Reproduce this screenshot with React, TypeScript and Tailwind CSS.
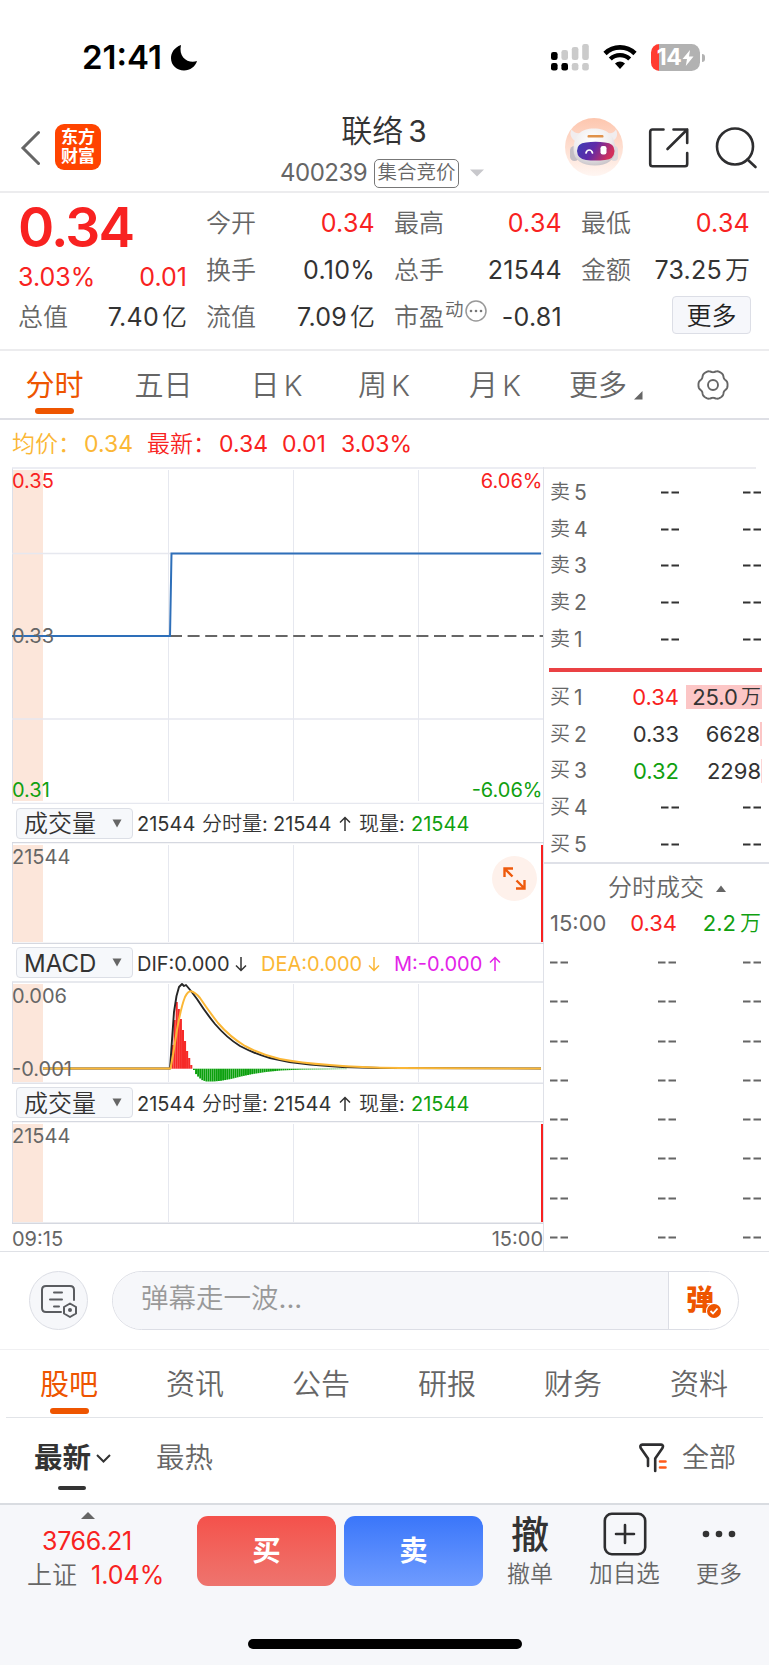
import React from "react";

const RED = "#f82221";
const GRID = "#e6e8ef";

const gearPath = (() => {
  const pts: string[] = [];
  for (let i = 0; i < 120; i++) {
    const a = (i / 120) * Math.PI * 2;
    const r = 13.9 + 0.9 * Math.cos(6 * a) - 0.25 * Math.cos(12 * a);
    pts.push(`${(16 + r * Math.cos(a)).toFixed(2)} ${(16 + r * Math.sin(a)).toFixed(2)}`);
  }
  return `M${pts.join("L")}Z`;
})();

function StatusBar() {
  return (
    <div className="flex h-[105px] items-start pl-[82px]">
      <div className="mt-[40px] w-[84px] text-[33px] font-semibold leading-[34px] text-black">21:41</div>
      <svg className="ml-[4px] mt-[44px]" width="28" height="28" viewBox="0 0 28 28">
        <path d="M11 1C4 3.500 1 9 1 14.300C1 21.500 7 26.500 14 26.500C20 26.500 25.500 22.500 27 17C19 20 8 14 11 1Z" fill="#000" />
      </svg>
      <svg className="ml-[353px] mt-[43px]" width="38" height="28" viewBox="0 0 38 28">
        <g fill="#000">
          <rect x="0" y="9" width="6.600" height="8" rx="2.300" />
          <rect x="0" y="20" width="6.600" height="7.500" rx="2.300" />
          <rect x="10.400" y="20" width="6.600" height="7.500" rx="2.300" />
        </g>
        <g fill="#cbcbcb">
          <rect x="10.400" y="7" width="6.600" height="10" rx="2.300" />
          <rect x="20.800" y="4" width="6.600" height="13" rx="2.300" />
          <rect x="31.200" y="1" width="6.600" height="16" rx="2.300" />
          <rect x="20.800" y="20" width="6.600" height="7.500" rx="2.300" />
          <rect x="31.200" y="20" width="6.600" height="7.500" rx="2.300" />
        </g>
      </svg>
      <svg className="ml-[14px] mt-[44px]" width="34" height="26" viewBox="0 0 34 26">
        <path d="M2 9.500A21.500 21.500 0 0 1 32 9.500" stroke="#000" strokeWidth="4.600" fill="none" />
        <path d="M7.300 15A14 14 0 0 1 26.700 15" stroke="#000" strokeWidth="4.400" fill="none" />
        <path d="M12 19.500A7.500 7.500 0 0 1 22 19.500L17 25Z" fill="#000" />
      </svg>
      <div className="ml-[14px] mt-[44px] flex items-center">
        <div className="flex h-[27px] w-[49px] items-center justify-center rounded-[8.5px] bg-[linear-gradient(90deg,#ff3b30_8px,#b2b2b2_8px)]">
          <span className="text-[23px] font-bold leading-none tracking-[-0.5px] text-white">14</span>
          <svg className="ml-[1px]" width="12" height="16" viewBox="0 0 12 16"><path d="M8 0L0.500 9H5L3.800 16L11.500 6.500H7Z" fill="#fff" /></svg>
        </div>
        <div className="ml-[2px] h-[8px] w-[3px] rounded-r-full bg-[#b2b2b2]" />
      </div>
    </div>
  );
}

function Robot() {
  return (
    <svg width="60" height="60" viewBox="0 0 60 60">
      <defs>
        <linearGradient id="halo" x1="0" y1="0" x2="0" y2="1">
          <stop offset="0" stopColor="#fdc6ae" /><stop offset="1" stopColor="#fff6f2" />
        </linearGradient>
        <linearGradient id="visor" x1="0" y1="0" x2="1" y2="0.3">
          <stop offset="0" stopColor="#3a3fb6" /><stop offset="0.5" stopColor="#5f2aa8" /><stop offset="1" stopColor="#d22f5c" />
        </linearGradient>
        <radialGradient id="shell" cx="0.45" cy="0.3" r="0.75">
          <stop offset="0" stopColor="#fff" /><stop offset="0.6" stopColor="#efedee" /><stop offset="1" stopColor="#c4bfc4" />
        </radialGradient>
      </defs>
      <circle cx="30" cy="30" r="29" fill="url(#halo)" />
      <path d="M13 25C7 22 5 17 7.500 12.500C10 16 14 17 18 15.500ZM47 25C53 22 54.500 18 52 12.500C50 16 47 17 42 15.500Z" fill="#f1edef" />
      <rect x="6" y="29" width="9" height="15" rx="4.500" fill="#c3bec4" />
      <rect x="46.500" y="29" width="7.500" height="15" rx="4" fill="#dedade" />
      <path d="M9.500 33C9.500 18 17 11.500 30 11.500C43 11.500 51 18 51.500 33C51 43 43 48.500 31 48.500C18 48.500 9.500 43 9.500 33Z" fill="url(#shell)" />
      <rect x="23.500" y="18" width="16" height="2.600" rx="1.200" fill="#e0924a" />
      <path d="M22 25.500Q31.500 24 41 25.500Q50.500 26 50.500 34Q50 42.500 41 43Q31.500 44 22 43Q13.500 42 13 34Q13 26 22 25.500Z" fill="url(#visor)" />
      <path d="M22 36C23 32 27.500 32 28.500 36" stroke="#fff" strokeWidth="1.700" fill="none" strokeLinecap="round" />
      <rect x="36.500" y="29" width="6" height="8.500" rx="2.200" fill="#fff" />
    </svg>
  );
}

function Header() {
  return (
    <div className="flex h-[88px] items-start border-b-2 border-[#ececee]">
      <svg className="ml-[20px] mt-[25px]" width="20" height="36" viewBox="0 0 20 36">
        <path d="M18.500 2.500L3 18L18.500 33.500" stroke="#666" strokeWidth="3" fill="none" strokeLinecap="round" />
      </svg>
      <div className="ml-[15px] mt-[19px] flex size-[46px] flex-col items-center justify-center rounded-[9px] bg-[#ff4400] font-['Inter','Noto_Sans_CJK_SC',sans-serif] text-[17px] font-bold leading-[19px] text-white">
        <span>东方</span><span>财富</span>
      </div>
      <div className="ml-[139px] flex w-[288px] flex-col items-center">
        <div className="mt-[9px] flex text-[31px] leading-[34px] text-[#333]">联络<span className="ml-[5px] text-[30px]">3</span></div>
        <div className="mt-[10px] flex h-[30px] w-full items-center pl-[40px] text-[24px] text-[#666]">
          <span className="w-[86px] tracking-[-0.500px]">400239</span>
          <span className="ml-[8px] flex h-[29px] w-[85px] items-center justify-center rounded-[5px] border border-[#777] text-[19.500px] leading-none">集合竞价</span>
          <svg className="ml-[11px]" width="14" height="8" viewBox="0 0 14 8"><path d="M0 0.500H14L7 7.500Z" fill="#c8c8cc" /></svg>
        </div>
      </div>
      <div className="ml-[36px] mt-[12px]"><Robot /></div>
      <svg className="ml-[24px] mt-[22px]" width="42" height="42" viewBox="0 0 42 42" fill="none" stroke="#2e2e30" strokeWidth="2.600" strokeLinecap="round" strokeLinejoin="round">
        <path d="M15.500 2.500H4.500Q2.200 2.500 2.200 4.800V37Q2.200 39.200 4.500 39.200H37Q39.200 39.200 39.200 37V26" />
        <path d="M25.500 2.500H39.200V16M39.200 2.500L19.500 22" />
      </svg>
      <svg className="ml-[25px] mt-[22px]" width="44" height="42" viewBox="0 0 44 42" fill="none" stroke="#2e2e30" strokeWidth="2.600">
        <circle cx="20" cy="19.500" r="18" /><path d="M32.500 32.500L40.500 40" strokeLinecap="round" />
      </svg>
    </div>
  );
}

function Stat({ label, value, red, extra }: { label: string; value: React.ReactNode; red?: boolean; extra?: React.ReactNode }) {
  return (
    <div className="flex h-[47px] items-center justify-between text-[25px] leading-none">
      <span className="flex text-[#666]">{label}{extra}</span>
      <span className={red ? "flex tracking-[0.250px] text-[#f82221]" : "flex tracking-[0.250px] text-[#333]"}>{value}</span>
    </div>
  );
}

const Wan = ({ n, u }: { n: string; u: string }) => <>{n}<span className="ml-[3px] tracking-normal">{u}</span></>;

function Quote() {
  return (
    <div className="grid h-[158px] grid-cols-[169px_169px_168px_169px] gap-x-[19px] border-b-2 border-[#ececee] pl-[18px] pt-[7px]">
      <div className="flex flex-col">
        <div className="h-[53px] pt-[1px] text-[55px] font-semibold leading-[52px] tracking-[-1.800px] text-[#f82221]">0.34</div>
        <div className="flex h-[41px] items-center justify-between pt-[8px] text-[25px] leading-none text-[#f82221]"><span>3.03%</span><span>0.01</span></div>
        <Stat label="总值" value={<Wan n="7.40" u="亿" />} />
      </div>
      <div>
        <Stat label="今开" value="0.34" red /><Stat label="换手" value="0.10%" /><Stat label="流值" value={<Wan n="7.09" u="亿" />} />
      </div>
      <div>
        <Stat label="最高" value="0.34" red /><Stat label="总手" value="21544" />
        <Stat label="市盈" value="-0.81" extra={
          <><span className="-mt-[5px] ml-[1px] text-[18.500px]">动</span>
          <svg className="-mt-[5px] ml-[1px]" width="22" height="22" viewBox="0 0 22 22"><circle cx="11" cy="11" r="10" fill="none" stroke="#999" strokeWidth="1.500" /><g fill="#777"><circle cx="6" cy="11" r="1.300" /><circle cx="11" cy="11" r="1.300" /><circle cx="16" cy="11" r="1.300" /></g></svg></>
        } />
      </div>
      <div>
        <Stat label="最低" value="0.34" red /><Stat label="金额" value={<Wan n="73.25" u="万" />} />
        <div className="ml-[91px] mt-[2px] flex h-[38px] w-[79px] items-center justify-center rounded-[4px] border border-[#dcdee6] bg-[#f6f7fb] pt-[2px] text-[25px] leading-none text-[#222]">更多</div>
      </div>
    </div>
  );
}

function ChartTabs() {
  return (
    <div className="flex h-[69px] border-b-2 border-[#dedfe5] pt-[19px] text-[29px] leading-[32px] text-[#666]">
      <div className="flex w-[109px] flex-col items-center text-[#ee5500]"><span className="font-['Inter','Noto_Sans_CJK_SC',sans-serif] font-normal">分时</span><span className="mt-[6px] h-[6px] w-[39px] rounded-full bg-[#ee5500]" /></div>
      <div className="w-[109px] text-center">五日</div>
      <div className="flex w-[117px] justify-center">日<span className="ml-[4px] font-light">K</span></div>
      <div className="flex w-[98px] justify-center">周<span className="ml-[4px] font-light">K</span></div>
      <div className="flex w-[124px] justify-center">月<span className="ml-[4px] font-light">K</span></div>
      <div className="ml-[12px] flex">更多<svg className="ml-[7px] mt-[21px]" width="9" height="9"><path d="M8.500 0V8.500H0Z" fill="#666" /></svg></div>
      <svg className="-mt-[1px] ml-[54px]" width="32" height="32" viewBox="0 0 32 32" fill="none" stroke="#666" strokeWidth="1.900"><path d={gearPath} /><circle cx="16" cy="16" r="5" /></svg>
    </div>
  );
}

const VGrid = ({ y1, y2 }: { y1: number; y2: number }) => (
  <>
    <rect x="12" y={y1} width="31" height={y2 - y1} fill="#fce6da" />
    <path d={`M168.500 ${y1}V${y2}M293.500 ${y1}V${y2}M418.500 ${y1}V${y2}`} stroke={GRID} />
    <path d={`M12.500 ${y1 - 2}V${y2 + 2}`} stroke="#dcdfe8" />
  </>
);

function PricePanel() {
  return (
    <svg className="block" width="532" height="337" viewBox="12 467 532 337">
      <VGrid y1={470} y2={801} />
      <path d="M12 468H544M12 803.500H544M12 553.500H543M12 719H543" stroke={GRID} strokeWidth="1.500" />
      <path d="M170 636H543" stroke="#666" strokeWidth="2" strokeDasharray="12 5.600" />
      <path d="M12 636H170L171.500 553.500H541" stroke="#2e6fb9" strokeWidth="2" fill="none" />
      <g fontSize="20">
        <text x="12" y="487.500" fill={RED}>0.35</text><text x="542.500" y="487.500" textAnchor="end" fill={RED}>6.06%</text>
        <text x="12" y="642.500" fill="#666">0.33</text>
        <text x="12" y="797" fill="#10a010">0.31</text><text x="542.500" y="797" textAnchor="end" fill="#10a010">-6.06%</text>
      </g>
    </svg>
  );
}

function VolumePanel({ y, h, line }: { y: number; h: number; line: string }) {
  return (
    <svg className="block" width="532" height={h} viewBox={`12 ${y} 532 ${h}`}>
      <VGrid y1={y + 3} y2={y + h - 2} />
      <path d={line} stroke="#d5d8e0" strokeWidth="1.400" />
      <path d={`M542 ${y + 3}V${y + h - 2}`} stroke={RED} strokeWidth="2" />
      <text x="12" y={y + 22} fontSize="20" fill="#666">21544</text>
    </svg>
  );
}

const redTops = [1045, 1020, 1002, 1009, 1019, 1030, 1041, 1051, 1058, 1065];
const greenKnots = [[193, 1070], [195, 1074], [197.500, 1077], [201, 1080], [205, 1081.500], [213, 1081.500], [220, 1080.800], [230, 1079], [240, 1076.500], [252, 1074], [265, 1072], [280, 1070.500], [300, 1069.600], [350, 1069]];
const greenBottom = (x: number) => {
  for (let i = 1; i < greenKnots.length; i++) {
    const [x0, y0] = greenKnots[i - 1];
    const [x1, y1] = greenKnots[i];
    if (x <= x1) return y0 + ((y1 - y0) * (x - x0)) / (x1 - x0);
  }
  return 1069;
};
const greenBars = Array.from({ length: 74 }, (_, i) => 193 + i * 2.080);

function MacdPanel() {
  return (
    <svg className="block" width="532" height="103" viewBox="12 981 532 103">
      <VGrid y1={984} y2={1082} />
      <path d="M12 982H544M12 1083.300H544" stroke="#e0e2e9" strokeWidth="1.400" />
      {redTops.map((t, i) => <rect key={i} x={171.500 + i * 2.080} y={t} width="2.100" height={1068.700 - t} fill="#f62a28" />)}
      {greenBars.map((x) => <rect key={x} x={x} y="1068.700" width="1.900" height={Math.max(0.400, greenBottom(x) - 1068.700)} fill="#0aa00c" />)}
      <path d="M43 1068.500H170L172 1040L174 1012L176.500 996L179 987L182 984L184 986L186 985L191 991L197 999Q206 1013 215 1024Q227 1038 240 1046Q255 1054 270 1058Q290 1063 310 1064.500Q340 1067.500 380 1068L541 1068.500" stroke="#262626" strokeWidth="1.900" fill="none" strokeLinejoin="round" />
      <path d="M43 1068.500H170.500L173 1055L177 1030Q181 1007 185 997Q188 991 191 991.300Q195 992 200 998Q208 1010 218 1023Q230 1037 245 1046Q262 1055 280 1059Q300 1063 330 1065Q360 1067.500 400 1068L541 1068.500" stroke="#fbb736" strokeWidth="2" fill="none" strokeLinejoin="round" />
      <g fontSize="20" fill="#666"><text x="12" y="1003">0.006</text><text x="12" y="1075.500">-0.001</text></g>
    </svg>
  );
}

function Arrow({ up, color }: { up?: boolean; color: string }) {
  return (
    <svg width="12" height="16" viewBox="0 0 12 16" fill="none" stroke={color} strokeWidth="1.500">
      {up ? <path d="M6 15V1.500M1 6.500L6 1.500L11 6.500" /> : <path d="M6 1V14.500M1 9.500L6 14.500L11 9.500" />}
    </svg>
  );
}

function IndicatorRow({ name, tall, children }: { name: string; tall?: boolean; children: React.ReactNode }) {
  return (
    <div className={tall ? "flex h-[38px] items-center pl-[4px] leading-none" : "flex h-[37px] items-center pl-[4px] leading-none"}>
      <div className="flex h-[31px] w-[117px] shrink-0 items-center justify-between rounded-[4px] border border-[#dcdfe6] bg-[#f6f8fb] pl-[7px] pr-[10px] text-[24px] text-[#333]">
        <span className="pt-[2px]">{name}</span>
        <svg width="10" height="9" viewBox="0 0 10 9"><path d="M0.500 0.500H9.500L5 8.500Z" fill="#666" /></svg>
      </div>
      <div className="ml-[4px] flex items-center pt-[2px] text-[20px] text-[#333]">{children}</div>
    </div>
  );
}

const VolumeText = () => (
  <>
    <span className="w-[65px]">21544</span>
    <span className="w-[71px]">分时量:</span>
    <span className="w-[66px]">21544</span>
    <Arrow up color="#333" />
    <span className="ml-[8px] w-[52px]">现量:</span>
    <span className="text-[#10a010]">21544</span>
  </>
);

function BookRow({ k, p, v, color, bar }: { k: [string, string]; p: string; v: React.ReactNode; color?: string; bar?: string }) {
  return (
    <div className="flex h-[36.800px] items-center pl-[6px] text-[22px] leading-none text-[#333]">
      <span className="flex w-[56px] text-[20px] text-[#666]">{k[0]}<span className="ml-[4px] text-[21px]">{k[1]}</span></span>
      <span className={`w-[73px] text-right ${color ?? ""}`}>{p}</span>
      <span className="flex grow justify-end">
        <span className={`flex h-[24px] items-center justify-end ${bar ?? "pr-[1px]"}`}>{v}</span>
      </span>
    </div>
  );
}

const Dash = ({ c }: { c: string }) => <svg width="18" height="3" viewBox="0 0 18 3"><path d="M0 1.500H7.500M10.500 1.500H18" stroke={c} strokeWidth="1.800" /></svg>;

function EmptyRow({ k }: { k: [string, string] }) {
  return (
    <div className="flex h-[36.800px] items-center pl-[6px] pr-[1px] text-[20px] leading-none text-[#666]">
      <span className="flex w-[111px]">{k[0]}<span className="ml-[4px] text-[21px]">{k[1]}</span></span>
      <Dash c="#333" /><span className="grow" /><Dash c="#333" />
    </div>
  );
}

function OrderBook() {
  return (
    <div className="w-[226px] border-l border-[#dfe1e8]">
      <div className="h-[397px] border-b-2 border-[#dfe1e8] pr-[7px]">
        <div className="h-[7px] w-[212px] border-t-2 border-[#ececf0]" />
        {["5", "4", "3", "2", "1"].map((n) => <EmptyRow key={n} k={["卖", n]} />)}
        <div className="mb-[7px] ml-[5px] mt-[10px] h-[4px] bg-[#ea4144]" />
        <BookRow k={["买", "1"]} p="0.34" v={<>25.0<span className="ml-[3px] text-[20px]">万</span></>} color="text-[#f82221]" bar="w-[76px] bg-[#fcc6c6] pr-[1px]" />
        <BookRow k={["买", "2"]} p="0.33" v="6628" bar="border-r-2 border-[#fcc6c6]" />
        <BookRow k={["买", "3"]} p="0.32" v="2298" color="text-[#10a010]" bar="border-r border-[#fcd6d6]" />
        <EmptyRow k={["买", "4"]} /><EmptyRow k={["买", "5"]} />
      </div>
      <div className="flex h-[43px] items-center pl-[64px] pt-[5px] text-[24px] leading-none text-[#666]">
        分时成交
        <svg className="ml-[12px]" width="10" height="7"><path d="M0 7H10L5 0.500Z" fill="#666" /></svg>
      </div>
      <div className="flex h-[36px] items-center pb-[5px] pl-[6px] pr-[8px] text-[22px] leading-none">
        <span className="w-[62px] text-[#666]">15:00</span>
        <span className="w-[65px] text-right text-[#f82221]">0.34</span>
        <span className="flex grow justify-end text-[#10a010]">2.2<span className="ml-[4px] text-[21px]">万</span></span>
      </div>
      {[0, 1, 2, 3, 4, 5, 6, 7].map((n) => (
        <div key={n} className="flex h-[39.250px] items-center pl-[6px] pr-[8px]"><Dash c="#666" /><span className="w-[90px]" /><Dash c="#666" /><span className="grow" /><Dash c="#666" /></div>
      ))}
    </div>
  );
}

function ChartArea() {
  return (
    <div className="flex h-[785px] overflow-hidden border-b border-[#dfe1e6] pl-[12px]">
      <div className="w-[531px] shrink-0">
        <PricePanel />
        <IndicatorRow name="成交量" tall><VolumeText /></IndicatorRow>
        <div className="relative">
          <VolumePanel y={842} h={102} line="M12 842.500H544M12 943.500H544" />
          <div className="absolute left-[480px] top-[14px] flex size-[45px] items-center justify-center rounded-full bg-[#fef1eb]">
            <svg width="23" height="23" viewBox="0 0 23 23" fill="none" stroke="#ee5a0c" strokeWidth="2.400"><path d="M1.500 10V1.500H10M1.500 1.500L9.500 9.500M21.500 13V21.500H13M21.500 21.500L13.500 13.500" /></svg>
          </div>
        </div>
        <IndicatorRow name="MACD">
          <span className="w-[98px]">DIF:0.000</span><Arrow color="#333" />
          <span className="ml-[14px] w-[107px] text-[#fbb736]">DEA:0.000</span><Arrow color="#fbb736" />
          <span className="ml-[14px] w-[95px] text-[#e324e8]">M:-0.000</span><Arrow up color="#e324e8" />
        </IndicatorRow>
        <MacdPanel />
        <IndicatorRow name="成交量"><VolumeText /></IndicatorRow>
        <VolumePanel y={1121} h={103} line="M12 1121.500H544M12 1223.300H544" />
        <div className="flex h-[27px] items-center justify-between pt-[3px] text-[20px] leading-none text-[#666]"><span>09:15</span><span>15:00</span></div>
      </div>
      <OrderBook />
    </div>
  );
}

function Danmaku() {
  return (
    <div className="flex h-[98px] items-start border-b border-[#f0f0f2] pl-[29px] pt-[19px]">
      <div className="flex size-[59px] items-center justify-center rounded-full border border-[#dcdee5] bg-[#f6f7fa]">
        <svg width="38" height="34" viewBox="0 0 38 34" fill="none" stroke="#5a5c60" strokeWidth="2" strokeLinecap="round">
          <path d="M21 28H6Q2 28 2 24V6Q2 2 6 2H30Q34 2 34 6V16M14 8.500H22M10 15.500H22M14 22.500H19" />
          <path d="M30 19.500L36 23V29.500L30 33L24 29.500V23Z" strokeLinejoin="round" /><circle cx="30" cy="26" r="1.200" fill="#5a5c60" stroke="none" />
          <circle cx="30" cy="26" r="1" />
        </svg>
      </div>
      <div className="ml-[24px] flex h-[59px] w-[627px] overflow-hidden rounded-full border border-[#dcdee5]">
        <div className="flex grow items-center border-r border-[#dcdee5] bg-[#f6f7fa] pb-[4px] pl-[28px] text-[27.500px] leading-none text-[#999]">弹幕走一波...</div>
        <div className="relative w-[69px]">
          <span className="absolute left-[17px] top-[13px] font-['Inter','Noto_Sans_CJK_SC',sans-serif] text-[28px] font-black leading-[30px] text-[#ee5500]">弹</span>
          <svg className="absolute left-[37px] top-[31px]" width="16" height="16" viewBox="0 0 16 16"><circle cx="8" cy="8" r="8" fill="#fff" /><circle cx="8" cy="8" r="7" fill="#ee5500" /><path d="M4.500 8L7 10.500L11.500 5.500" stroke="#fff" strokeWidth="1.800" fill="none" /></svg>
        </div>
      </div>
    </div>
  );
}

function ForumTabs() {
  return (
    <>
      <div className="mx-[6px] flex h-[68px] border-b border-[#e2e4e8] pt-[19px] text-[29px] leading-[32px] text-[#666]">
        <div className="flex w-[126px] flex-col items-center text-[#ee5500]"><span className="font-['Inter','Noto_Sans_CJK_SC',sans-serif] font-normal">股吧</span><span className="mt-[7px] h-[6px] w-[39px] rounded-full bg-[#ee5500]" /></div>
        {["资讯", "公告", "研报", "财务", "资料"].map((t) => <div key={t} className="w-[126px] text-center">{t}</div>)}
      </div>
      <div className="flex h-[85px] pl-[34px] pt-[24px] text-[28.500px] leading-[32px] text-[#666]">
        <div className="w-[122px]">
          <div className="flex items-center font-['Inter','Noto_Sans_CJK_SC',sans-serif] font-bold text-[#333]">最新<svg className="ml-[5px]" width="15" height="9" viewBox="0 0 15 9"><path d="M1 1L7.500 7.500L14 1" fill="none" stroke="#333" strokeWidth="2" /></svg></div>
          <div className="ml-[24px] mt-[12px] h-[4px] w-[28px] rounded-full bg-[#333]" />
        </div>
        <div className="w-[483px]">最热</div>
        <svg className="mt-[1px]" width="28" height="30" viewBox="0 0 28 30" fill="none" strokeWidth="2.600" strokeLinecap="round" strokeLinejoin="round">
          <path d="M9 23V15.500L1.700 5Q0.500 2 3.500 1.600H22Q25 2 23.500 5L16.200 15.500V28" stroke="#2e2e30" />
          <path d="M21 18.500H26.500M21 24.500H26.500" stroke="#ff5a1a" />
        </svg>
        <div className="ml-[15px] text-[27px]">全部</div>
      </div>
    </>
  );
}

function BottomBar() {
  return (
    <div className="h-[163px] border-t-2 border-[#d9dce1] bg-[#f6f7fa]">
      <div className="flex h-[100px]">
        <div className="flex w-[197px] flex-col text-[25px] leading-none text-[#f82221]">
          <svg className="ml-[81px] mt-[7px]" width="14" height="7"><path d="M0 7H14L7 0Z" fill="#666" /></svg>
          <div className="mt-[10px] pl-[42px] tracking-[-0.300px]">3766.21</div>
          <div className="mt-[9px] flex pl-[27px]"><span className="w-[64px] text-[#666]">上证</span>1.04%</div>
        </div>
        <div className="mt-[11px] flex h-[70px] w-[139px] items-center justify-center rounded-[11px] bg-linear-to-b from-[#f4514b] to-[#ee746e] font-['Inter','Noto_Sans_CJK_SC',sans-serif] text-[28.500px] font-bold leading-none text-white">买</div>
        <div className="ml-[8px] mt-[11px] flex h-[70px] w-[139px] items-center justify-center rounded-[11px] bg-linear-to-b from-[#3a76fa] to-[#6f9bfe] font-['Inter','Noto_Sans_CJK_SC',sans-serif] text-[28.500px] font-bold leading-none text-white">卖</div>
        <div className="ml-[6px] flex w-[82px] flex-col items-center text-[23px] leading-[26px] text-[#666]">
          <span className="mt-[9px] h-[40px] font-['Inter','Noto_Sans_CJK_SC',sans-serif] text-[38px] font-medium leading-[40px] text-[#333]">撤</span><span className="mt-[7px]">撤单</span>
        </div>
        <div className="flex w-[107px] flex-col items-center text-[23.500px] leading-[26px] text-[#666]">
          <svg className="mt-[7px]" width="44" height="44" viewBox="0 0 44 44" fill="none" stroke="#2e2e30" strokeWidth="2.600" strokeLinecap="round"><rect x="1.800" y="1.800" width="40.400" height="40.400" rx="7" /><path d="M22 13V31M13 22H31" /></svg>
          <span className="mt-[5px]">加自选</span>
        </div>
        <div className="flex w-[82px] flex-col items-center text-[23px] leading-[26px] text-[#666]">
          <svg className="mt-[25px]" width="34" height="8" viewBox="0 0 34 8" fill="#333"><circle cx="4" cy="4" r="3.300" /><circle cx="17" cy="4" r="3.300" /><circle cx="30" cy="4" r="3.300" /></svg>
          <span className="mt-[23px]">更多</span>
        </div>
      </div>
      <div className="ml-[248px] mt-[34px] h-[10px] w-[274px] rounded-full bg-black" />
    </div>
  );
}

export default function App() {
  return (
    <div className="h-[1665px] w-[769px] overflow-hidden whitespace-nowrap bg-white font-['Inter','Noto_Sans_CJK_SC_DemiLight','Noto_Sans_CJK_SC_Light','Noto_Sans_CJK_SC',sans-serif] font-normal">
      <StatusBar />
      <Header />
      <Quote />
      <ChartTabs />
      <div className="flex h-[47px] items-center pl-[12px] pt-[1px] text-[23px] leading-none text-[#f82221]">
        <span className="w-[72px] text-[#fbb736]">均价：</span><span className="w-[63px] text-[#fbb736]">0.34</span>
        <span className="w-[72px]">最新：</span><span className="w-[63px]">0.34</span><span className="w-[59px]">0.01</span><span>3.03%</span>
      </div>
      <ChartArea />
      <Danmaku />
      <ForumTabs />
      <BottomBar />
    </div>
  );
}
